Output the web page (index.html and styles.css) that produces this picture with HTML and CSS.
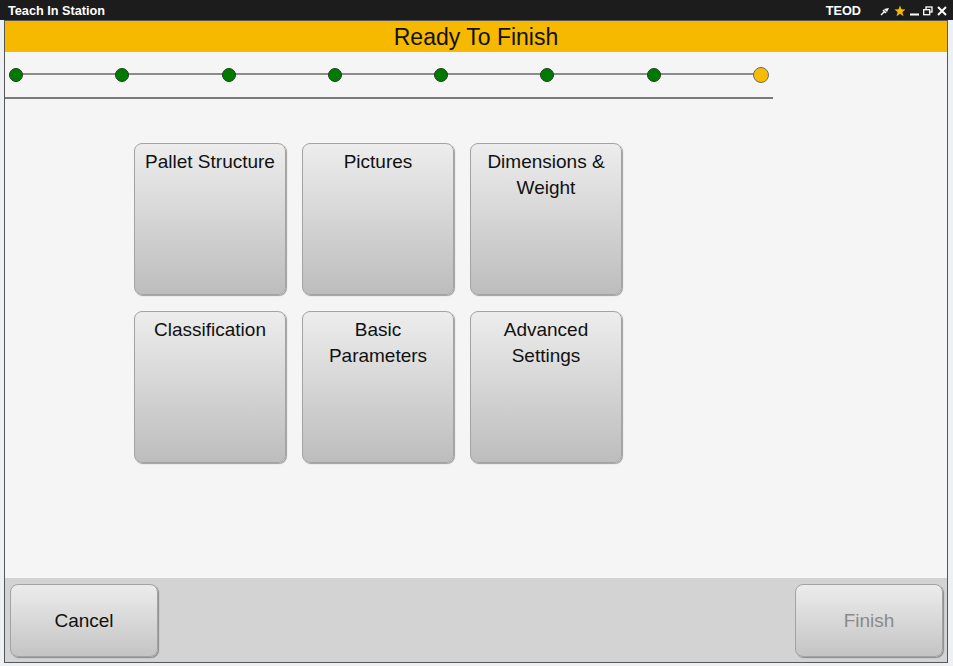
FILE: index.html
```
<!DOCTYPE html>
<html>
<head>
<meta charset="utf-8">
<link rel="stylesheet" href="styles.css">
</head>
<body>
<div class="titlebar">
  <span class="app-title">Teach In Station</span>
  <span class="user">TEOD</span>
  <div class="controls">
    <svg class="ic" width="10" height="10" viewBox="0 0 10 10"><path d="M1 9 L4.5 5.5" stroke="#fff" stroke-width="1.4"/><path d="M4 3 L7 6 L9 2 Z" fill="#fff"/><path d="M3 4 L6 7" stroke="#fff" stroke-width="1.6"/></svg>
    <svg class="ic" width="12" height="12" viewBox="0 0 12 12"><path d="M6 0.5 L7.5 4.3 L11.6 4.5 L8.4 7 L9.5 11.2 L6 8.8 L2.5 11.2 L3.6 7 L0.4 4.5 L4.5 4.3 Z" fill="#f6b800"/></svg>
    <svg class="ic" width="9" height="10" viewBox="0 0 9 10"><rect x="0" y="7.5" width="9" height="2" fill="#fff"/></svg>
    <svg class="ic" width="10" height="10" viewBox="0 0 10 10"><rect x="3" y="1" width="6" height="5" fill="none" stroke="#fff" stroke-width="1.3"/><rect x="0.7" y="3.7" width="6" height="5" fill="#1c1c1c" stroke="#fff" stroke-width="1.3"/></svg>
    <svg class="ic" width="10" height="10" viewBox="0 0 10 10"><path d="M1 1 L9 9 M9 1 L1 9" stroke="#fff" stroke-width="2"/></svg>
  </div>
</div>
<div class="frame">
  <div class="header">
    <div class="header-title">Ready To Finish</div>
    <div class="header-rule"></div>
  </div>
  <div class="stepper">
    <div class="track"></div>
    <span class="dot done"></span>
    <span class="dot done"></span>
    <span class="dot done"></span>
    <span class="dot done"></span>
    <span class="dot done"></span>
    <span class="dot done"></span>
    <span class="dot done"></span>
    <span class="dot current"></span>
  </div>
  <div class="main">
    <div class="tiles">
      <div class="tile">Pallet Structure</div>
      <div class="tile">Pictures</div>
      <div class="tile">Dimensions &amp;<br>Weight</div>
      <div class="tile">Classification</div>
      <div class="tile">Basic<br>Parameters</div>
      <div class="tile">Advanced<br>Settings</div>
    </div>
  </div>
  <div class="footer">
    <div class="btn">Cancel</div>
    <div class="btn disabled">Finish</div>
  </div>
</div>
</body>
</html>
```
FILE: styles.css
```
html, body {
  margin: 0;
  padding: 0;
}
body {
  width: 953px;
  height: 666px;
  background: #eef1f4;
  font-family: "Liberation Sans", Arial, sans-serif;
  overflow: hidden;
}
.titlebar {
  height: 20px;
  padding-top: 1px;
  box-sizing: border-box;
  background: #1c1c1c;
  display: flex;
  align-items: center;
  color: #fff;
  font-weight: bold;
  font-size: 12.7px;
}
.app-title {
  margin-left: 8px;
  flex: 1;
}
.user {
  margin-right: 19px;
}
.controls {
  display: flex;
  align-items: center;
  gap: 4px;
  margin-right: 6px;
}
.ic {
  display: block;
}
.frame {
  margin-left: 4px;
  width: 942px;
  height: 641px;
  border: 1px solid #575757;
  background: #f5f5f5;
  display: flex;
  flex-direction: column;
}
.header {
  background: #f6b900;
  height: 31px;
  display: flex;
  flex-direction: column;
}
.header-title {
  flex: 1;
  text-align: center;
  font-size: 23px;
  line-height: 33px;
  color: #111;
}
.header-rule {
  width: 768px;
  height: 1px;
  background: #8a6a10;
}
.stepper {
  width: 760px;
  height: 45px;
  padding: 0 4px;
  border-bottom: 2px solid #7a7a7a;
  position: relative;
  display: flex;
  align-items: center;
  justify-content: space-between;
}
.track {
  position: absolute;
  left: 10px;
  right: 10px;
  top: 21px;
  height: 2px;
  background: #8c8c8c;
}
.dot {
  position: relative;
  border-radius: 50%;
  box-sizing: border-box;
}
.dot.done {
  width: 14px;
  height: 14px;
  background: #007a00;
  border: 1px solid #1f3f1f;
}
.dot.current {
  width: 16px;
  height: 16px;
  background: #f7bb00;
  border: 1px solid #6e6e6e;
}
.main {
  flex: 1;
  padding: 44px 0 0 129px;
}
.tiles {
  display: grid;
  grid-template-columns: repeat(3, 152px);
  grid-auto-rows: 152px;
  gap: 16px;
}
.tile {
  box-sizing: border-box;
  border: 1px solid #a3a3a3;
  border-radius: 8px;
  background: linear-gradient(#ededed, #bdbdbd);
  box-shadow: 1px 1px 1px rgba(0,0,0,0.35);
  text-align: center;
  font-size: 19px;
  line-height: 26px;
  color: #111;
  padding-top: 5px;
}
.footer {
  height: 84px;
  background: #d3d3d3;
  box-sizing: border-box;
  padding: 6px 4px 5px 5px;
  display: flex;
  justify-content: space-between;
}
.btn {
  box-sizing: border-box;
  width: 148px;
  height: 73px;
  border: 1px solid #a3a3a3;
  border-radius: 8px;
  background: linear-gradient(#ececec, #c4c4c4);
  box-shadow: 1px 1px 1px rgba(0,0,0,0.35);
  font-size: 19px;
  color: #111;
  display: flex;
  align-items: center;
  justify-content: center;
}
.btn.disabled {
  color: #8a8a8a;
}
```
